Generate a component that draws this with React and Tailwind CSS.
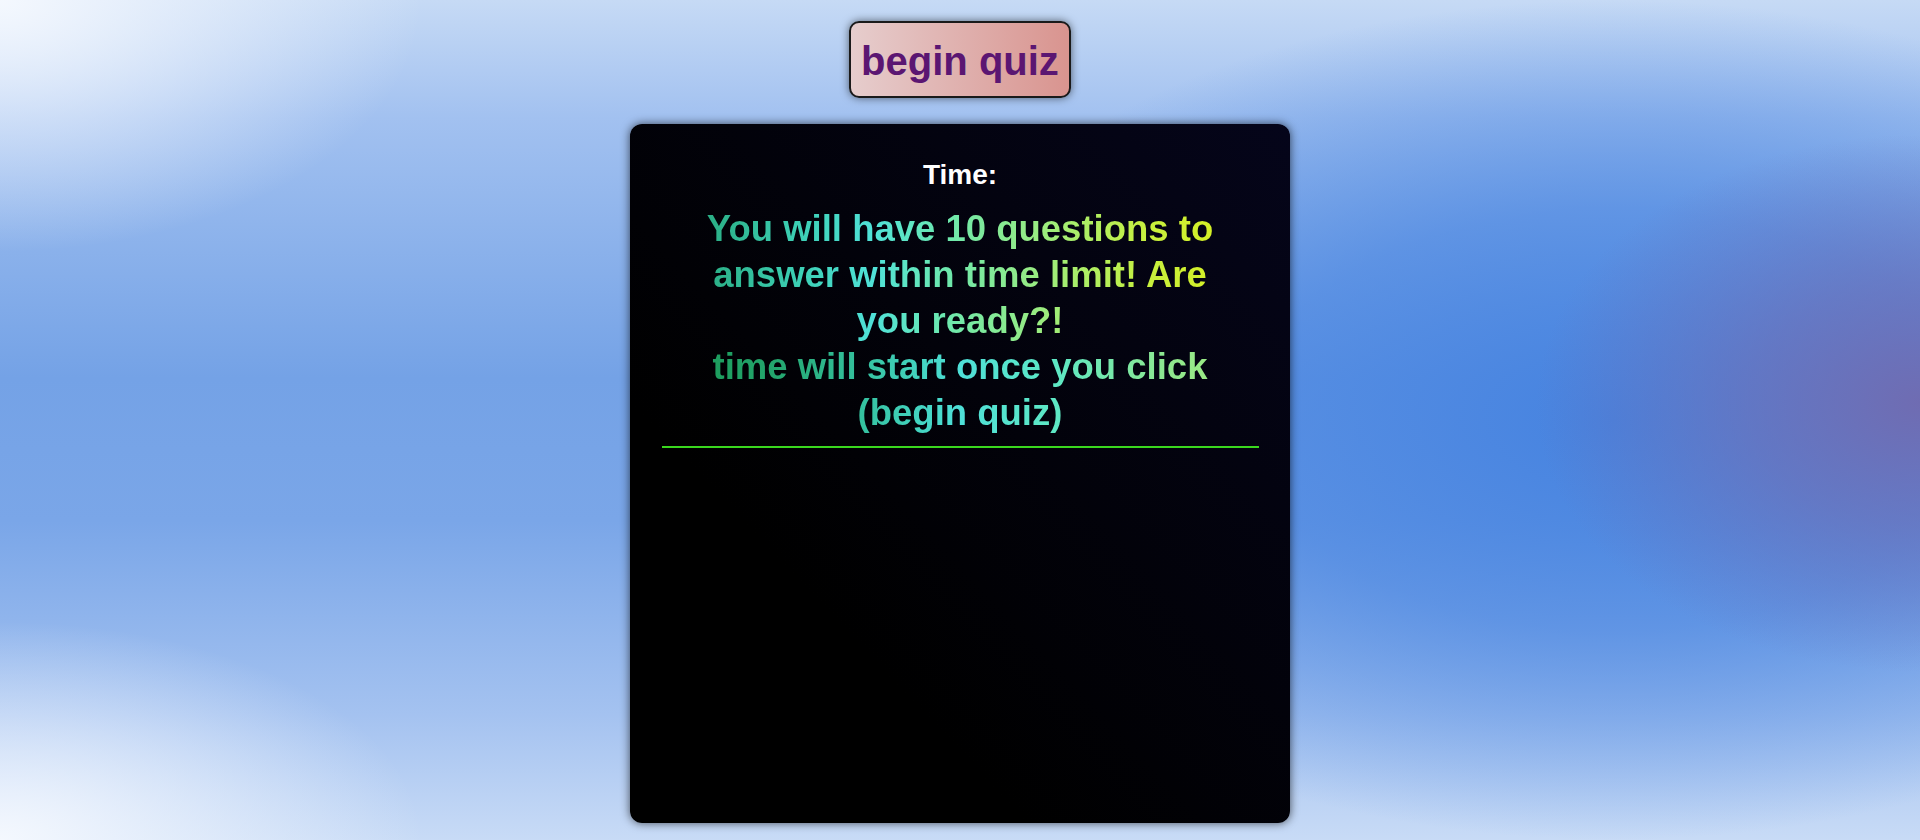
export default function App() {
  return (
    <div className="w-full h-[840px] overflow-hidden flex flex-col items-center font-['Liberation_Sans',Arial,sans-serif] bg-[radial-gradient(ellipse_20%_32%_at_100%_48%,#6f6cb2_0%,rgba(111,108,178,0.6)_45%,rgba(111,108,178,0)_100%),radial-gradient(ellipse_38%_50%_at_84%_50%,#4683e0_0%,rgba(70,131,224,0.65)_50%,rgba(70,131,224,0)_100%),radial-gradient(ellipse_22%_30%_at_0%_0%,#f4f8fe_0%,rgba(244,248,254,0)_100%),radial-gradient(ellipse_22%_26%_at_0%_100%,#f4f8fe_0%,rgba(244,248,254,0)_100%),linear-gradient(to_bottom,#c6daf5_0%,#a2c1f0_14%,#74a2e6_45%,#7aa6e8_62%,#a4c2f0_85%,#c8dbf6_100%)]">
      <button className="mt-[21px] w-[222px] h-[77px] rounded-[10px] border-2 border-[#1a1a1a] bg-[linear-gradient(to_right,#e6cdcd,#d9948f)] shadow-[0_0_8px_rgba(0,0,0,0.55)] text-[40px] font-bold leading-none text-[#5b1672] flex items-center justify-center pt-[2px]">
        begin quiz
      </button>
      <div className="mt-[26px] w-[660px] h-[699px] rounded-xl bg-[linear-gradient(to_top_right,#000000_30%,#05051a_100%)] shadow-[0_0_10px_rgba(0,0,0,0.65)] flex flex-col items-center pt-[35px]">
        <div className="text-white text-[28px] font-bold leading-[32px]">Time:</div>
        <div className="mt-[15px] w-[540px] text-center font-bold text-[36.5px] leading-[46px]">
          <p className="bg-[linear-gradient(to_right,#27a87c_0%,#3ccfb4_20%,#50e2d8_34%,#6ee8ac_48%,#9aec80_65%,#c6f040_84%,#d8f020_100%)] bg-clip-text text-transparent">
            You will have 10 questions to answer within time limit! Are you ready?!
          </p>
          <p className="bg-[linear-gradient(to_right,#1b9a58_0%,#23a56c_15%,#35c2a0_32%,#4ee0d8_50%,#5ee8c4_68%,#8ee890_88%,#a0ec80_100%)] bg-clip-text text-transparent">
            time will start once you click (begin quiz)
          </p>
        </div>
        <div className="mt-[10px] w-[597px] h-[2px] bg-[#3ad81e]" />
      </div>
    </div>
  );
}
